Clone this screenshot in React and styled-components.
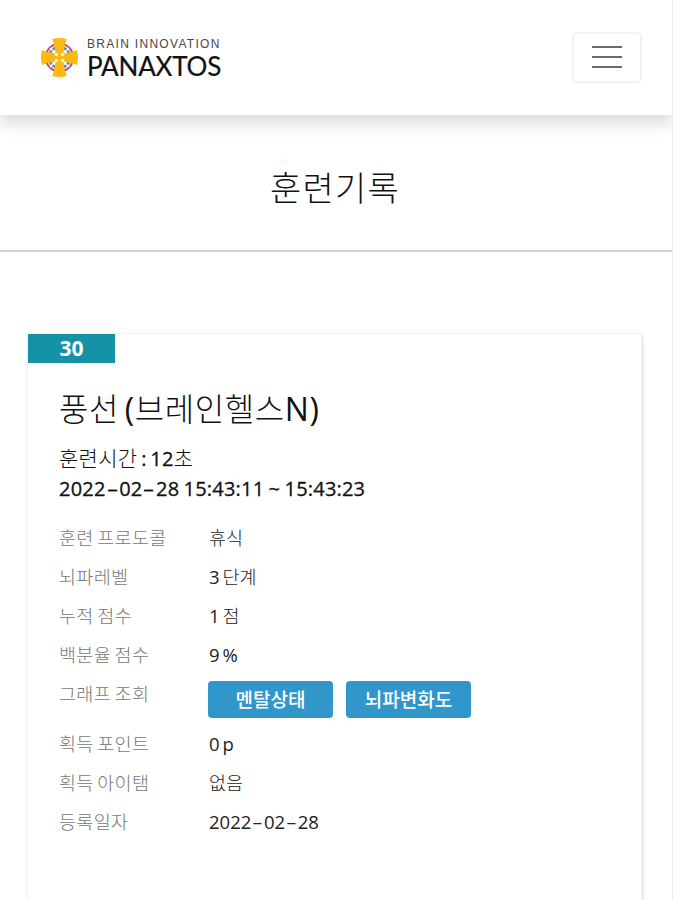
import React from "react";
import styled, { createGlobalStyle } from "styled-components";

const GlobalStyle = createGlobalStyle`
  * {
    box-sizing: border-box;
  }

  body {
    margin: 0;
    background: #fff;
    color: #111;
    font-family: "Open Sans", "Noto Sans CJK KR", sans-serif;
    overflow: hidden;
  }
`;

const Page = styled.div`
  width: 100%;
  height: 900px;
  overflow: hidden;
  border-right: 1px solid #ececec;
`;

const Header = styled.header`
  height: 115px;
  padding: 0 30px 0 40px;
  display: flex;
  align-items: center;
  justify-content: space-between;
  background: #fff;
  box-shadow: 0 8px 16px rgba(0, 0, 0, 0.15);
`;

const Brand = styled.div`
  display: flex;
  align-items: center;
  gap: 8px;
`;

const Emblem = styled.svg`
  width: 39px;
  height: 41px;
  margin-top: -1px;
`;

const BrandText = styled.div`
  display: flex;
  flex-direction: column;
`;

const Tagline = styled.span`
  height: 14px;
  font: 400 12px/14px "Liberation Sans", sans-serif;
  letter-spacing: 1.3px;
  color: #484848;
  white-space: nowrap;
`;

const BrandName = styled.span`
  height: 28px;
  font: 400 26px/30px Lato, sans-serif;
  letter-spacing: -0.2px;
  color: #111;
  -webkit-text-stroke: 0.2px #111;
`;

const MenuButton = styled.button`
  width: 70px;
  height: 51px;
  margin-top: -1px;
  padding: 0;
  display: flex;
  flex-direction: column;
  align-items: center;
  justify-content: center;
  gap: 8px;
  background: #fff;
  border: 2px solid #f2f2f2;
  border-radius: 5px;
`;

const MenuLine = styled.span`
  width: 30px;
  height: 2px;
  background: #6b6b6b;
`;

const TitleBar = styled.div`
  height: 137px;
  display: flex;
  align-items: center;
  justify-content: center;
  border-bottom: 2px solid #d2d2d2;
`;

const Title = styled.h1`
  margin: 10px 2px 0 0;
  font-size: 34px;
  line-height: 48px;
  font-weight: 300;
  letter-spacing: 1.2px;
`;

const Card = styled.section`
  height: 640px;
  margin: 81px 30px 0 27px;
  border: 1px solid #f3f3f3;
  border-radius: 4px;
  box-shadow: 1px 2px 3px rgba(0, 0, 0, 0.16);
`;

const Badge = styled.div`
  width: 87px;
  height: 29px;
  padding-bottom: 1px;
  display: flex;
  align-items: center;
  justify-content: center;
  background: #1592a6;
  color: #fff;
  font-size: 21px;
  font-weight: 700;
`;

const CardBody = styled.div`
  padding: 22px 31px;
`;

const Name = styled.h2`
  margin: 0 0 11px;
  height: 48px;
  font-size: 32px;
  line-height: 48px;
  font-weight: 300;
  letter-spacing: 0.55px;
  word-spacing: -3px;
  white-space: nowrap;
`;

const Latin = styled.span`
  font-weight: 400;
`;

const Time = styled.div`
  height: 30px;
  font-size: ${({ $light }) => ($light ? 21 : 20)}px;
  line-height: ${({ $light }) => ($light ? 28 : 30)}px;
  font-weight: ${({ $light }) => ($light ? 300 : 500)};
  letter-spacing: ${({ $spacing }) => $spacing || 0}px;
  word-spacing: ${({ $words }) => $words || 0}px;
  -webkit-text-stroke: ${({ $light }) => ($light ? 0 : 0.3)}px #111;
  white-space: nowrap;
`;

const Amount = styled.span`
  font-size: 20px;
  font-weight: 500;
  -webkit-text-stroke: 0.3px #111;
`;

const Dash = styled.span`
  display: inline-block;
  width: 0.68em;
  text-align: center;
  transform: scaleX(1.8);
`;

const Details = styled.dl`
  margin: 14px 0 0;
`;

const Row = styled.div`
  height: ${({ $tall }) => ($tall ? 50 : 39)}px;
  display: grid;
  grid-template-columns: 150px 1fr;
  line-height: 39px;
  font-size: 18.5px;
`;

const Label = styled.dt`
  color: #777;
  font-weight: 300;
  letter-spacing: 0.3px;
  word-spacing: -1.5px;
`;

const Value = styled.dd`
  margin: 0;
  font-size: 18.5px;
  color: #222;
  font-weight: 500;
  word-spacing: -2px;
`;

const Unit = styled.span`
  font-weight: 300;
`;

const Buttons = styled.dd`
  margin: 7px 0 0 -1px;
  display: flex;
  gap: 13px;
`;

const GraphButton = styled.button`
  width: 125px;
  height: 37px;
  padding: 0 0 2px;
  border: 0;
  border-radius: 4px;
  background: #3197cb;
  color: #fff;
  font: 500 19px/34px "Noto Sans CJK KR", sans-serif;
`;

const graphs = ["멘탈상태", "뇌파변화도"];

const details = [
  { label: "훈련 프로도콜", unit: "휴식" },
  { label: "뇌파레벨", value: "3 ", unit: "단계" },
  { label: "누적 점수", value: "1 ", unit: "점" },
  { label: "백분율 점수", value: "9 %" },
  { label: "그래프 조회", graphs },
  { label: "획득 포인트", value: "0 p" },
  { label: "획득 아이탬", unit: "없음" },
  { label: "등록일자", date: "2022-02-28" },
];

const Logo = () => (
  <Brand>
    <Emblem viewBox="0 0 39 41">
      <circle cx="19.5" cy="20.5" r="13.8" fill="#fff" stroke="#c94c68" strokeWidth="2" />
      <circle cx="19.5" cy="20.5" r="10.5" fill="none" stroke="#6c87ae" strokeWidth="2.6" />
      <path d="M10 11L29 30M29 11L10 30" stroke="#fff" strokeWidth="1.2" />
      <path
        d="M12 2Q19.5 0 27 2Q24 8 23.5 16.5Q31 16 37 13Q39 20.5 37 28Q31 25 23.5 24.5Q24 33 27 39Q19.5 41 12 39Q15 33 15.5 24.5Q8 25 2 28Q0 20.5 2 13Q8 16 15.5 16.5Q15 8 12 2Z"
        fill="#fbb914"
      />
      <circle cx="16.5" cy="17.5" r="1.7" fill="#fff6d8" />
      <circle cx="22.5" cy="17.5" r="1.7" fill="#fff6d8" />
      <circle cx="16.5" cy="23.5" r="1.7" fill="#fff6d8" />
      <circle cx="22.5" cy="23.5" r="1.7" fill="#fff6d8" />
    </Emblem>
    <BrandText>
      <Tagline>BRAIN INNOVATION</Tagline>
      <BrandName>PANAXTOS</BrandName>
    </BrandText>
  </Brand>
);

const DateText = ({ date }) =>
  date.split("-").map((part, index) => (
    <React.Fragment key={index}>
      {index > 0 && <Dash>-</Dash>}
      {part}
    </React.Fragment>
  ));

const DetailRow = ({ item }) => (
  <Row $tall={!!item.graphs}>
    <Label>{item.label}</Label>
    {item.graphs ? (
      <Buttons>
        {item.graphs.map((graph) => (
          <GraphButton key={graph}>{graph}</GraphButton>
        ))}
      </Buttons>
    ) : (
      <Value>
        {item.date ? <DateText date={item.date} /> : item.value}
        {item.unit && <Unit>{item.unit}</Unit>}
      </Value>
    )}
  </Row>
);

const App = () => {
  return (
    <Page>
      <GlobalStyle />
      <Header>
        <Logo />
        <MenuButton aria-label="메뉴">
          <MenuLine />
          <MenuLine />
          <MenuLine />
        </MenuButton>
      </Header>
      <TitleBar>
        <Title>훈련기록</Title>
      </TitleBar>
      <Card>
        <Badge>30</Badge>
        <CardBody>
          <Name>
            풍선 <Latin>(</Latin>브레인헬스<Latin>N)</Latin>
          </Name>
          <Time $light $spacing={0.3} $words={-2}>
            훈련시간 <Amount>: 12</Amount>초
          </Time>
          <Time $spacing={0.2} $words={-1.1}>
            <DateText date="2022-02-28" /> 15:43:11 ~ 15:43:23
          </Time>
          <Details>
            {details.map((item) => (
              <DetailRow key={item.label} item={item} />
            ))}
          </Details>
        </CardBody>
      </Card>
    </Page>
  );
};

export default App;
